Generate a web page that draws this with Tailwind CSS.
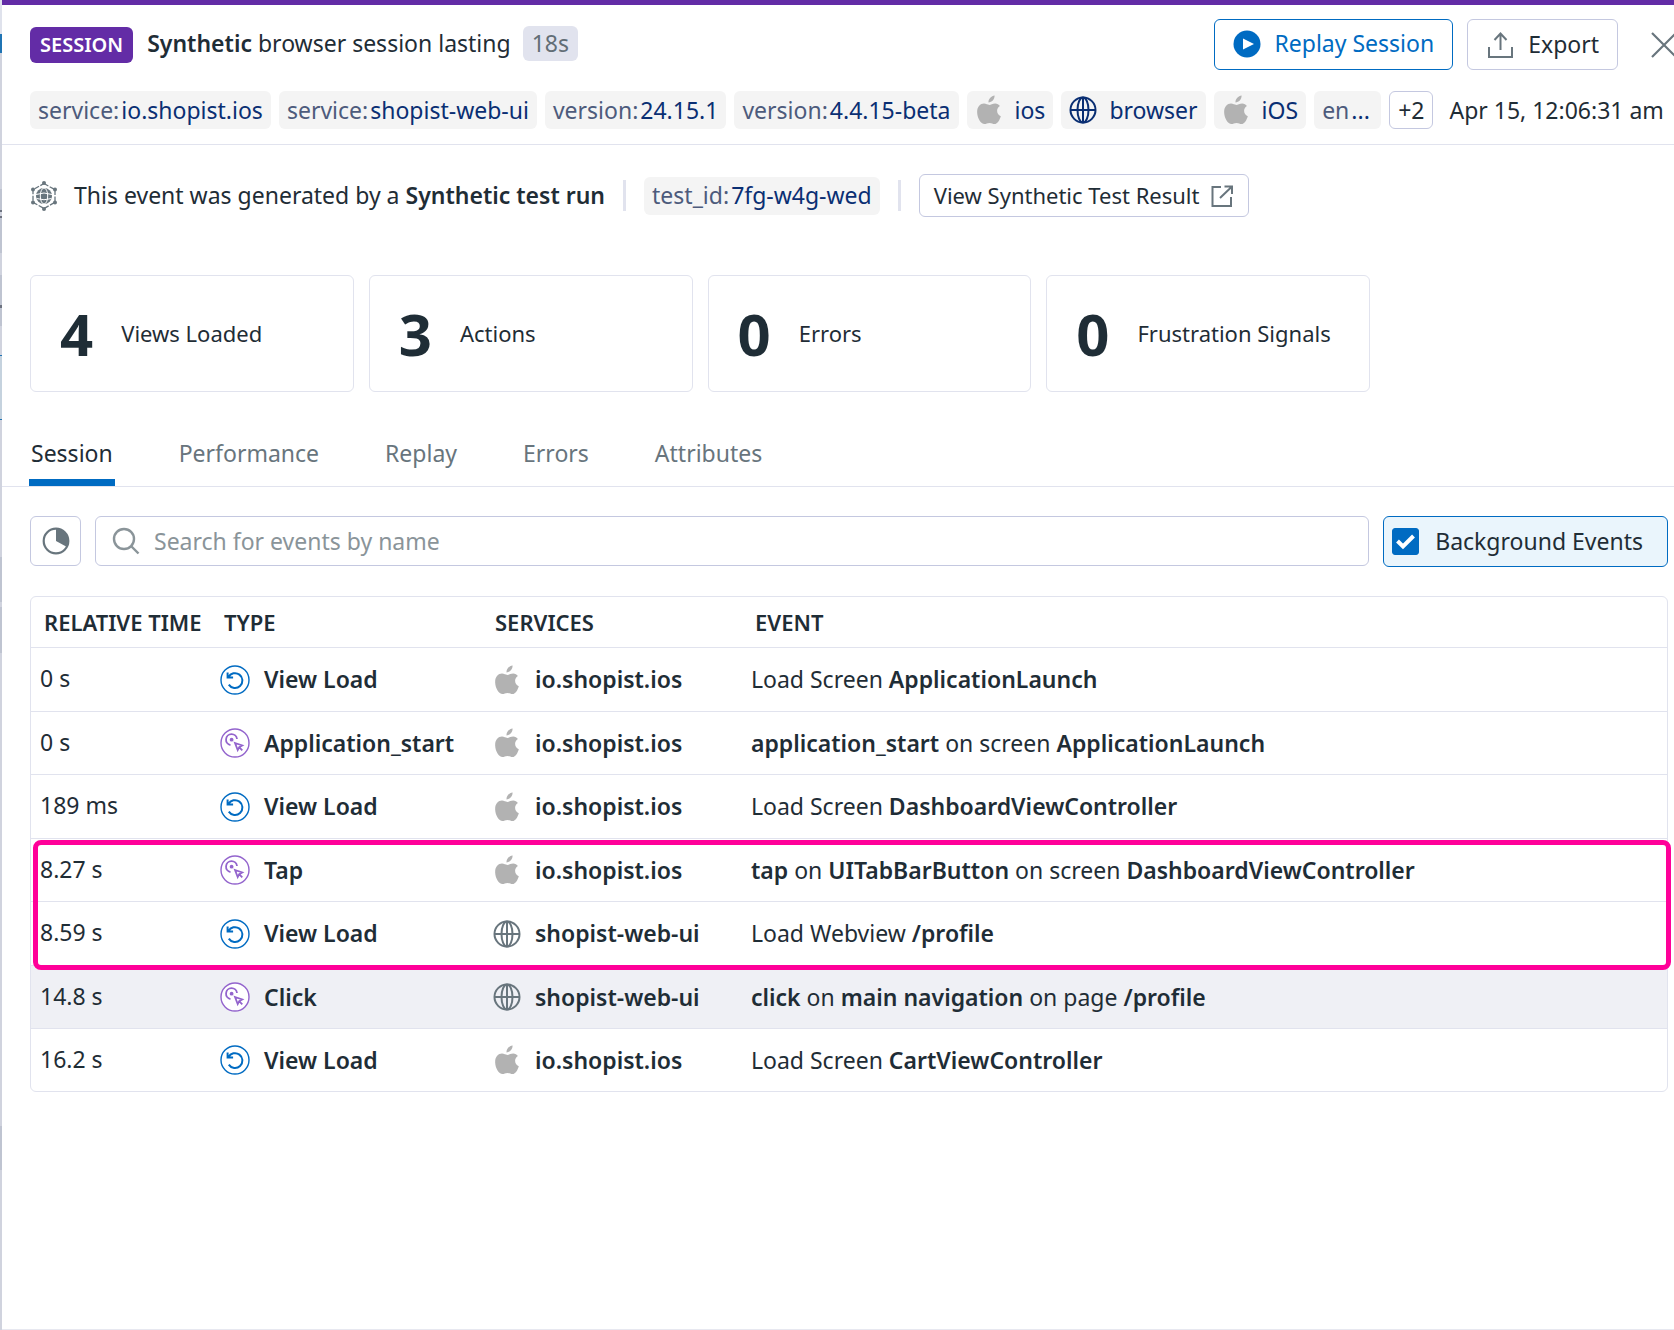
<!DOCTYPE html>
<html lang="en">
<head>
<meta charset="utf-8">
<title>Session details</title>
<script src="https://cdn.jsdelivr.net/npm/@tailwindcss/browser@4"></script>
</head>
<body class="flex bg-[#d0d3de] font-['Noto_Sans',sans-serif] text-[23px] text-[#1f2d36]">
<svg class="hidden" aria-hidden="true">
  <symbol id="apple" viewBox="0 0 24 30"><path fill="currentColor" d="M17.6 0.4c.2 3.600-2.700 7-6.100 7C11.200 4.100 14.200.800 17.600.400ZM22.900 10.900c-4.200 2.600-3.500 8.500.900 10.300-.900 3.200-3.300 7.900-6.300 7.900-1.900 0-2.500-1.100-5-1.100-2.400 0-3.200 1.100-5 1.100C3.800 29.100.500 23.100.200 18-.300 12.300 3.100 8.600 7 8.600c2 0 3.700 1.300 5.300 1.300 1.400 0 3.300-1.400 5.900-1.400 1.900 0 3.700.900 4.700 2.400Z"/></symbol>
  <symbol id="globe" viewBox="0 0 28 28"><g fill="none" stroke="currentColor" stroke-width="2"><circle cx="14" cy="14" r="12.500"/><ellipse cx="14" cy="14" rx="5.500" ry="12.500"/><path d="M1.500 14h25M14 1.500v25"/></g></symbol>
  <symbol id="view" viewBox="0 0 30 30"><circle cx="15" cy="15" r="14" fill="#fff" stroke="currentColor" stroke-width="1.400"/><path fill="none" stroke="currentColor" stroke-width="2" d="M7.600 7.500v5h5.500M8.400 12.200A7.400 7.400 0 1 1 8.800 19.600"/></symbol>
  <symbol id="action" viewBox="0 0 30 30"><circle cx="15" cy="15" r="14" fill="#fff" stroke="currentColor" stroke-width="1.400"/><path fill="none" stroke="currentColor" stroke-width="1.800" d="M10.500 17.100A5.500 5.500 0 1 1 17 11M15 15l7.200 2.500-3 1.600-1.500 3ZM19.300 19.300l3 3"/><circle cx="11.600" cy="11.700" r="1.900" fill="currentColor"/></symbol>
</svg>

<!-- sliver of the page behind the side panel -->
<div class="w-0.5 shrink-0" aria-hidden="true">
  <div class="h-[34px] bg-[#dfe2ec]"></div>
  <div class="h-[19px] bg-[#1f74b4]"></div>
  <div class="h-[136px] bg-[#d0d3de]"></div>
  <div class="h-[21px] bg-[#bfc4d1]"></div>
  <div class="h-0.5 bg-[#6d7380]"></div>
  <div class="h-1"></div>
  <div class="h-0.5 bg-[#6d7380]"></div>
  <div class="h-[35px] bg-[#bfc4d1]"></div>
  <div class="h-[22px]"></div>
  <div class="h-[30px] bg-[#bfc4d1]"></div>
  <div class="h-[3px] bg-[#6d7380]"></div>
  <div class="h-[18px] bg-[#bfc4d1]"></div>
  <div class="h-[29px]"></div>
  <div class="h-[65px] border-y border-[#1f74b4] bg-[#c5d2de]"></div>
  <div class="h-[137px]"></div>
  <div class="h-[45px] bg-[#bfc4d1]"></div>
  <div class="h-[5px]"></div>
  <div class="h-[46px] bg-[#bfc4d1]"></div>
  <div class="h-[473px]"></div>
  <div class="h-11 bg-[#bfc4d1]"></div>
</div>

<div class="flex min-h-screen min-w-0 flex-1 flex-col overflow-hidden border-t-[5px] border-b border-t-[#632ca6] border-b-[#e7e8f0] bg-white">
  <header class="border-b border-[#e1e3ee] pl-7">
    <div class="flex items-center pt-3.5">
      <span class="flex h-9 items-center rounded-md bg-[#632ca6] px-2.5 text-xl font-semibold text-white">SESSION</span>
      <h1 class="ml-3.5 flex items-center pb-0.5 whitespace-pre"><span><b class="font-semibold">Synthetic</b> browser session lasting</span><span class="ml-3 flex h-[35px] items-center rounded-md bg-[#e1e3ee] px-[9px] text-[#626e76]">18s</span></h1>
      <div class="-mr-1 ml-auto flex items-center">
        <button class="flex h-[51px] items-center gap-3.5 rounded-md border border-[#006bc2] px-[18px] pb-0.5 text-[#006bc2]">
          <svg class="size-7" viewBox="0 0 28 28"><circle cx="14" cy="14" r="13.500" fill="currentColor"/><path fill="#fff" d="M10 8.500v11l11-5.500Z"/></svg>Replay Session</button>
        <button class="ml-3.5 flex h-[51px] items-center gap-3.5 rounded-md border border-[#c4c8e0] px-[18px]">
          <svg class="size-7 text-[#68757d]" viewBox="0 0 28 28" fill="none" stroke="currentColor" stroke-width="2"><path d="M3 16v10h23V16M14.500 19V2.500M8.500 9l6-6.500L20.500 9"/></svg>Export</button>
        <button class="ml-8 text-[#68757d]" aria-label="Close"><svg class="size-7" viewBox="0 0 28 28" fill="none" stroke="currentColor" stroke-width="2.200"><path d="M2 2l24 24M26 2L2 26"/></svg></button>
      </div>
    </div>
    <div class="mt-[21px] mb-[15px] flex h-[38px] items-center gap-2 whitespace-nowrap text-[#0a2f73] [&>span]:flex [&>span]:h-full [&>span]:items-center [&>span]:rounded-md [&>span]:bg-[#f4f4f4] [&>span]:px-2 [&_i]:mr-0.5">
      <span><i class="text-[#4d5b7c] not-italic">service:</i>io.shopist.ios</span>
      <span><i class="text-[#4d5b7c] not-italic">service:</i>shopist-web-ui</span>
      <span><i class="text-[#4d5b7c] not-italic">version:</i>24.15.1</span>
      <span><i class="text-[#4d5b7c] not-italic">version:</i>4.4.15-beta</span>
      <span><svg class="mr-3.5 ml-0.5 h-[30px] w-6 text-[#b2b2b2]"><use href="#apple"/></svg>ios</span>
      <span><svg class="mr-3 size-7"><use href="#globe"/></svg>browser</span>
      <span><svg class="mr-3.5 ml-0.5 h-[30px] w-6 text-[#b2b2b2]"><use href="#apple"/></svg>iOS</span>
      <span class="w-[67px]"><i class="text-[#4d5b7c] not-italic">en</i>...</span>
      <button class="h-full rounded-md border border-[#c4c8e0] px-2 text-[#1f2d36]">+2</button>
      <time class="ml-2 text-[#1f2d36]">Apr 15, 12:06:31 am</time>
    </div>
  </header>

  <main class="pl-7">
    <section class="mt-[29px] flex items-center whitespace-nowrap">
      <svg class="h-[30px] w-7 text-[#68757d]" viewBox="0 0 28 30"><path fill="none" stroke="currentColor" stroke-width="1.300" stroke-dasharray="5 1.500" d="M14 2.500l11 6.200v12.600l-11 6.200-11-6.200V8.700Z"/><g fill="currentColor"><circle cx="14" cy="2" r="2"/><circle cx="25" cy="8.500" r="2"/><circle cx="25" cy="21.500" r="2"/><circle cx="14" cy="28" r="2"/><circle cx="3" cy="21.500" r="2"/><circle cx="3" cy="8.500" r="2"/><circle cx="14" cy="15" r="8"/></g><g fill="none" stroke="#fff"><ellipse cx="14" cy="15" rx="3.700" ry="8"/><path d="M6 13.500q8-3 16 0M6.500 17.500q7.500 2.500 15 0"/></g></svg>
      <p class="ml-4">This event was generated by a <b class="font-semibold">Synthetic test run</b></p>
      <i class="mx-[18px] h-[31px] w-[3px] bg-[#e1e3ee]"></i>
      <span class="flex h-[38px] items-center rounded-md bg-[#f4f4f4] px-2 text-[#0a2f73]"><i class="mr-0.5 text-[#4d5b7c] not-italic">test_id:</i>7fg-w4g-wed</span>
      <i class="mx-[18px] h-[31px] w-[3px] bg-[#e1e3ee]"></i>
      <button class="flex h-[43px] items-center gap-[11px] rounded-md border border-[#c4c8e0] px-3.5 text-[22px]">View Synthetic Test Result
        <svg class="size-6 text-[#68757d]" viewBox="0 0 24 24" fill="none" stroke="currentColor" stroke-width="2"><path d="M11 3H2.500v19H21v-9M10 14L22 2.500M14.500 2.500H22V10"/></svg></button>
    </section>

    <section class="mt-[58px] mr-[304px] grid grid-cols-4 gap-[15px]">
      <div class="flex h-[117px] items-center gap-7 rounded-md border border-[#e1e3ee] pl-[29px]"><b class="text-[58px] font-bold">4</b><span class="text-[22px]">Views Loaded</span></div>
      <div class="flex h-[117px] items-center gap-7 rounded-md border border-[#e1e3ee] pl-[29px]"><b class="text-[58px] font-bold">3</b><span class="text-[22px]">Actions</span></div>
      <div class="flex h-[117px] items-center gap-7 rounded-md border border-[#e1e3ee] pl-[29px]"><b class="text-[58px] font-bold">0</b><span class="text-[22px]">Errors</span></div>
      <div class="flex h-[117px] items-center gap-7 rounded-md border border-[#e1e3ee] pl-[29px]"><b class="text-[58px] font-bold">0</b><span class="text-[22px]">Frustration Signals</span></div>
    </section>

    <nav class="mt-7 -ml-7 flex h-[67px] gap-[62px] border-b border-[#e1e3ee] pl-[27px] text-[#68757d]">
      <a href="#" class="flex items-center border-b-[7px] border-[#006bc2] px-0.5 pt-[7px] text-[#1f2d36]">Session</a>
      <a href="#" class="flex items-center px-0.5">Performance</a>
      <a href="#" class="flex items-center px-0.5">Replay</a>
      <a href="#" class="flex items-center px-0.5">Errors</a>
      <a href="#" class="flex items-center px-0.5">Attributes</a>
    </nav>

    <div class="mt-[29px] mr-1.5 flex gap-3.5">
      <button class="flex h-[50px] w-[51px] items-center justify-center rounded-md border border-[#c4c8e0] text-[#68757d]" aria-label="Time display"><svg class="size-7" viewBox="0 0 28 28"><circle cx="14" cy="14" r="12.300" fill="none" stroke="currentColor" stroke-width="2.200"/><path fill="currentColor" d="M14 1.500A12.500 12.500 0 0 1 25 20L14 14Z"/></svg></button>
      <label class="flex h-[50px] flex-1 items-center gap-3.5 rounded-md border border-[#c4c8e0] px-4">
        <svg class="size-7 text-[#8a9499]" viewBox="0 0 28 28" fill="none" stroke="currentColor" stroke-width="2.400"><circle cx="12" cy="12" r="10"/><path d="M19 19l7.500 7.500"/></svg>
        <input type="text" aria-label="Search events" placeholder="Search for events by name" class="min-w-0 flex-1 outline-none placeholder:text-[#8a9499]">
      </label>
      <label class="flex h-[51px] items-center rounded-md border border-[#006bc2] bg-[#eaf5fc] pr-6 pl-2">
        <span class="relative mr-4 flex size-[27px]"><input type="checkbox" checked class="size-full appearance-none rounded-[3px] border border-[#006bc2] checked:bg-[#006bc2]"><svg class="pointer-events-none absolute inset-0" viewBox="0 0 27 27" fill="none" stroke="#fff" stroke-width="4"><path d="M5.500 13l5.500 5.500L21.500 8"/></svg></span>Background Events</label>
    </div>

    <div class="relative mt-[29px] mr-1.5 rounded-md border border-[#e1e3ee]">
      <table class="w-full table-fixed border-separate border-spacing-0 text-left [&_b]:font-semibold [&_td]:border-t [&_td]:border-[#e1e3ee]">
        <colgroup><col class="w-[189px]"><col class="w-[273px]"><col class="w-[258px]"><col></colgroup>
        <thead><tr class="h-[50px] text-[22px] [&>th]:font-semibold"><th class="pl-[13px]">RELATIVE TIME</th><th class="pl-1">TYPE</th><th class="pl-[2px]">SERVICES</th><th class="pl-1">EVENT</th></tr></thead>
        <tbody id="rows"></tbody>
      </table>
      <div class="pointer-events-none absolute top-[243px] -right-1 left-[2px] h-[130px] rounded-lg border-[5px] border-[#ff0099]"></div>
    </div>
  </main>
</div>
<script>
const V = ['view', 'text-[#006bc2]'], A = ['action', 'text-[#9364cd]'];
const ios = ['apple', 'h-[30px] w-6 text-[#b2b2b2]', 'io.shopist.ios'], web = ['globe', 'size-7 text-[#68757d]', 'shopist-web-ui'];
const data = [
  ['0 s', V, 'View Load', ios, 'Load Screen <b>ApplicationLaunch</b>'],
  ['0 s', A, 'Application_start', ios, '<b>application_start</b> on screen <b>ApplicationLaunch</b>'],
  ['189 ms', V, 'View Load', ios, 'Load Screen <b>DashboardViewController</b>'],
  ['8.27 s', A, 'Tap', ios, '<b>tap</b> on <b>UITabBarButton</b> on screen <b>DashboardViewController</b>'],
  ['8.59 s', V, 'View Load', web, 'Load Webview <b>/profile</b>'],
  ['14.8 s', A, 'Click', web, '<b>click</b> on <b>main navigation</b> on page <b>/profile</b>'],
  ['16.2 s', V, 'View Load', ios, 'Load Screen <b>CartViewController</b>'],
];
document.getElementById('rows').innerHTML = data.map(([t, [icon, color], type, [svc, cls, name], ev], i) => `
  <tr class="${i % 2 || i === 6 ? 'h-[63px]' : 'h-16'} ${i === 5 ? 'bg-[#eff0f5]' : ''}">
    <td class="pb-0.5 pl-[9px]">${t}</td>
    <td><span class="flex items-center gap-3.5"><svg class="size-[30px] ${color}"><use href="#${icon}"/></svg><b>${type}</b></span></td>
    <td><span class="flex items-center gap-3.5"><span class="flex w-7 justify-center"><svg class="${cls}"><use href="#${svc}"/></svg></span><b>${name}</b></span></td>
    <td>${ev}</td>
  </tr>`).join('');
</script>
</body>
</html>
